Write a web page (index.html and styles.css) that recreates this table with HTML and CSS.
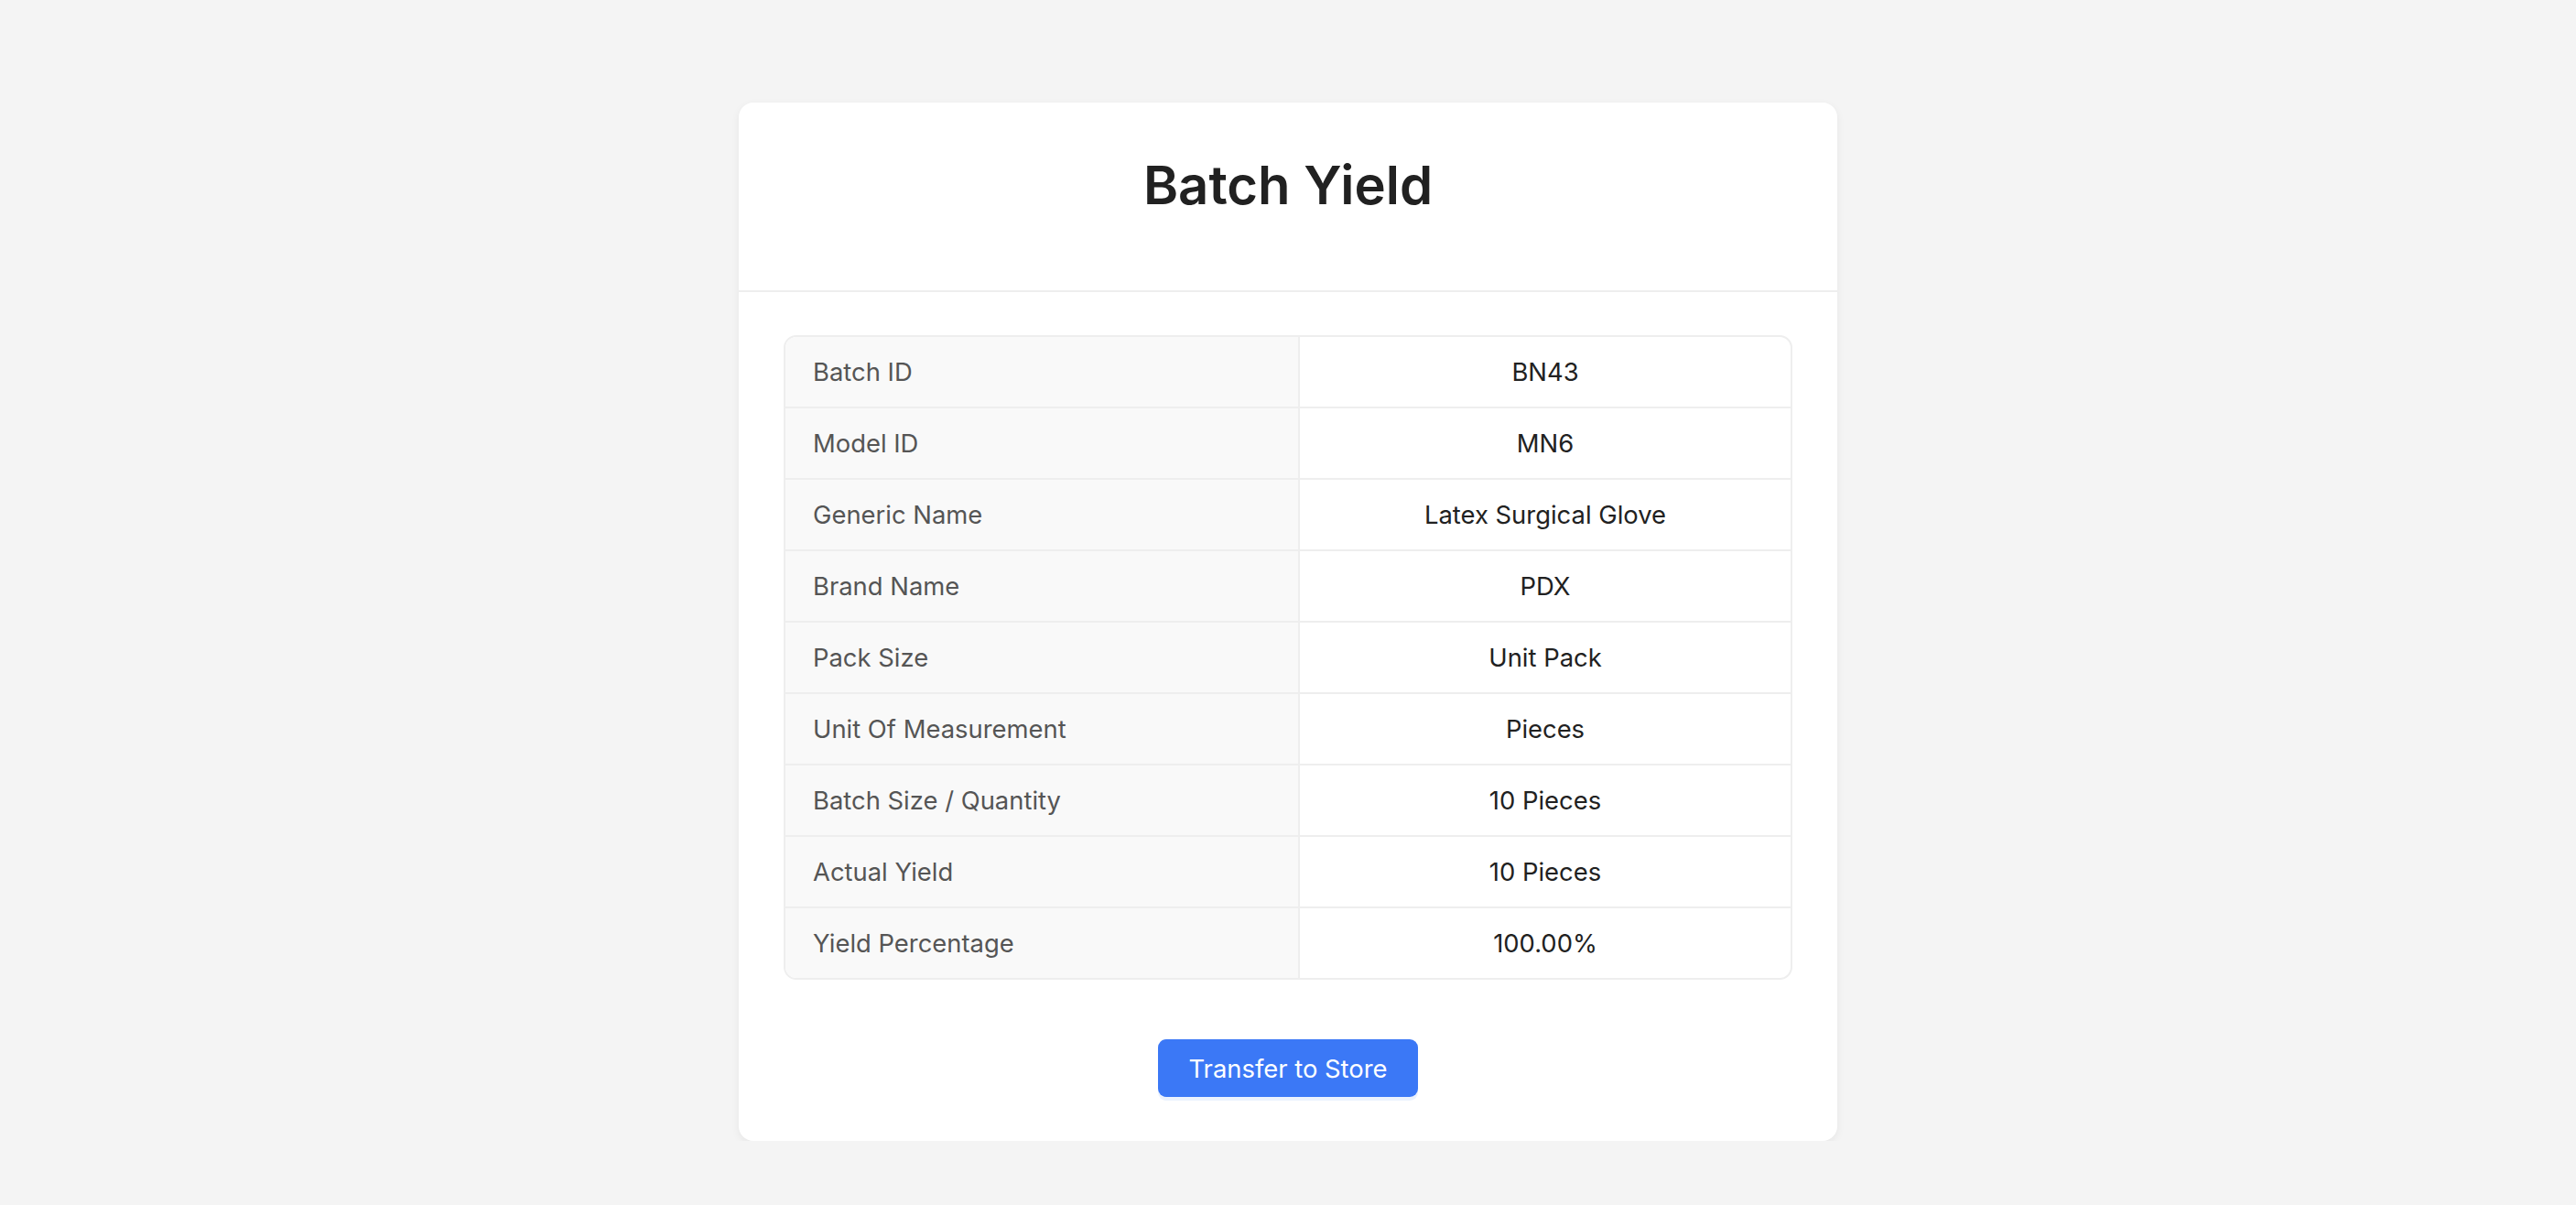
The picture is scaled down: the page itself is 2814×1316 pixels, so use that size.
FILE: index.html
```html
<!DOCTYPE html>
<html lang="en">
<head>
<meta charset="utf-8">
<title>Batch Yield</title>
<link rel="stylesheet" href="styles.css">
</head>
<body>
<main class="card">
  <header class="card-header">
    <h1 class="title">Batch Yield</h1>
  </header>
  <section class="card-body">
    <div class="details">
      <div class="row"><div class="label">Batch ID</div><div class="value">BN43</div></div>
      <div class="row"><div class="label">Model ID</div><div class="value">MN6</div></div>
      <div class="row"><div class="label">Generic Name</div><div class="value">Latex Surgical Glove</div></div>
      <div class="row"><div class="label">Brand Name</div><div class="value">PDX</div></div>
      <div class="row"><div class="label">Pack Size</div><div class="value">Unit Pack</div></div>
      <div class="row"><div class="label">Unit Of Measurement</div><div class="value">Pieces</div></div>
      <div class="row"><div class="label">Batch Size / Quantity</div><div class="value">10 Pieces</div></div>
      <div class="row"><div class="label">Actual Yield</div><div class="value">10 Pieces</div></div>
      <div class="row"><div class="label">Yield Percentage</div><div class="value">100.00%</div></div>
    </div>
    <div class="actions">
      <button class="btn-primary" type="button">Transfer to Store</button>
    </div>
  </section>
</main>
</body>
</html>
```

FILE: styles.css
```css
* { box-sizing: border-box; }

html, body {
  margin: 0;
  padding: 0;
}

body {
  background: #f4f4f4;
  font-family: Inter, "Noto Sans", "Liberation Sans", sans-serif;
  color: #222;
  padding-top: 112px;
}

.card {
  width: 1200px;
  margin: 0 auto;
  background: #ffffff;
  border-radius: 16px;
  box-shadow: 0 3px 10px rgba(0, 0, 0, 0.06);
}

.card-header {
  padding: 55px 40px 80px;
  border-bottom: 2px solid #eeeeee;
  text-align: center;
}

.title {
  margin: 0;
  font-size: 58px;
  line-height: 70px;
  font-weight: 600;
  color: #212121;
}

.card-body {
  padding: 47px 49px 48px;
}

.details {
  border: 2px solid #eeeeee;
  border-radius: 14px;
  overflow: hidden;
}

.row {
  display: grid;
  grid-template-columns: 560px 1fr;
}

.row + .row {
  border-top: 2px solid #eeeeee;
}

.label {
  display: flex;
  align-items: center;
  min-height: 76px;
  padding-left: 30px;
  background: #f9f9f9;
  color: #555555;
  font-size: 27.4px;
}

.value {
  display: flex;
  align-items: center;
  justify-content: center;
  min-height: 76px;
  border-left: 2px solid #eeeeee;
  color: #212121;
  font-size: 27.4px;
}

.actions {
  display: flex;
  justify-content: center;
  margin-top: 65px;
}

.btn-primary {
  height: 63px;
  padding: 0 33px;
  border: none;
  border-radius: 9px;
  background: #3b78f6;
  color: #ffffff;
  font-family: Inter, "Noto Sans", "Liberation Sans", sans-serif;
  font-size: 27.4px;
  box-shadow: 0 4px 0 rgba(59, 130, 246, 0.1);
  cursor: pointer;
}
```
